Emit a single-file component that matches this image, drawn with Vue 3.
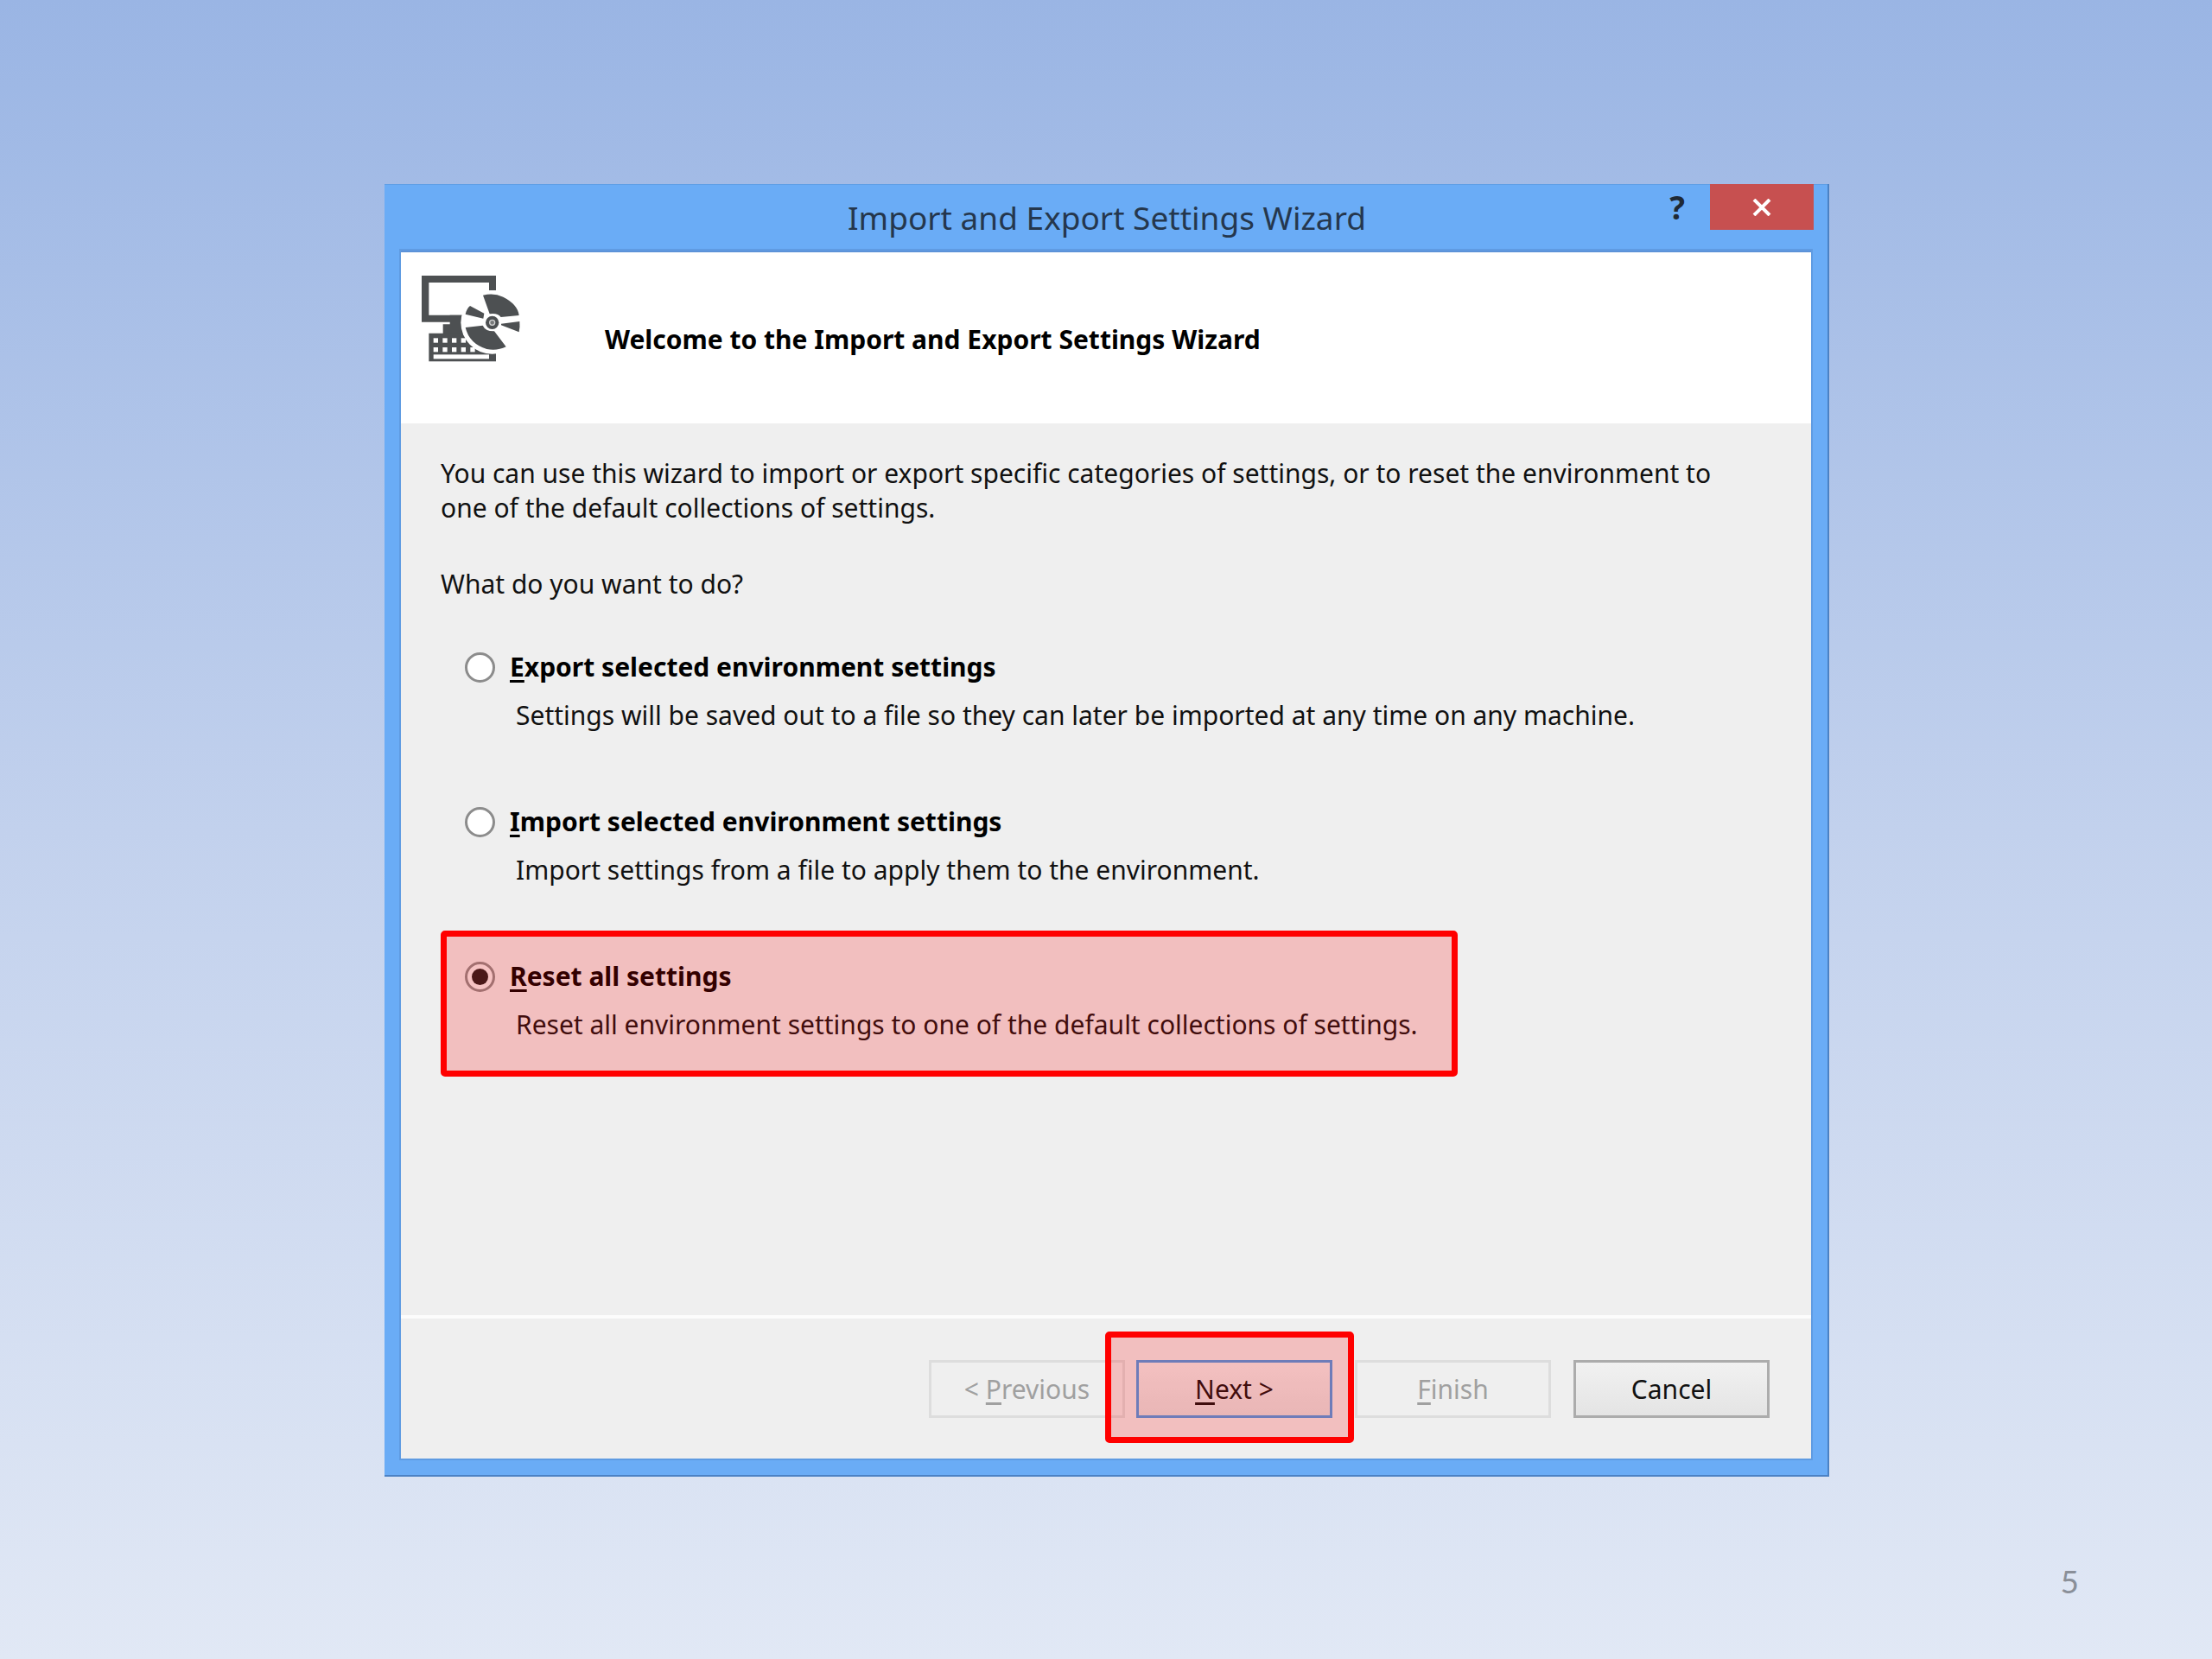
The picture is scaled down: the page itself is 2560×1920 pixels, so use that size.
<script setup>
import { ref } from 'vue'

const selected = ref('reset')

const options = [
  {
    id: 'export',
    key: 'E',
    rest: 'xport selected environment settings',
    text: 'Settings will be saved out to a file so they can later be imported at any time on any machine.'
  },
  {
    id: 'import',
    key: 'I',
    rest: 'mport selected environment settings',
    text: 'Import settings from a file to apply them to the environment.'
  },
  {
    id: 'reset',
    key: 'R',
    rest: 'eset all settings',
    text: 'Reset all environment settings to one of the default collections of settings.',
    marked: true
  }
]

const topKeys = [41, 73, 105, 137]
const bottomKeys = [41, 73, 105, 137, 169]
</script>

<template>
  <div class="slide">
    <main class="dialog" role="dialog" aria-labelledby="dialog-title">
      <header class="titlebar">
        <h1 id="dialog-title" class="title">Import and Export Settings Wizard</h1>
        <div class="controls">
          <button type="button" class="help" aria-label="Help">?</button>
          <button type="button" class="close" aria-label="Close">
            <svg viewBox="0 0 22 20" width="22" height="20" aria-hidden="true">
              <path d="M2 1L20 19M20 1L2 19" stroke="#fff" stroke-width="4" fill="none" />
            </svg>
          </button>
        </div>
      </header>

      <div class="client">
        <section class="banner">
          <svg class="logo" viewBox="0 0 342 300" aria-hidden="true">
            <g fill="#4d5052">
              <path fill-rule="evenodd" d="M0 0H258V161H0ZM25 24V137H234V24Z" />
              <path d="M98 137H200V205H74V169H98Z" />
              <path d="M25 200H258V298H25Z" />
            </g>
            <g fill="#fff">
              <rect v-for="x in topKeys" :key="'t' + x" :x="x" y="217" width="16" height="16" />
              <rect v-for="x in bottomKeys" :key="'b' + x" :x="x" y="249" width="16" height="16" />
              <rect x="41" y="274" width="193" height="15" />
              <path d="M225 51H270V100H225Z" />
              <circle cx="245" cy="163" r="109" />
            </g>
            <g fill="#4d5052">
              <path d="M213 68Q250 58 283 74Q334 100 338 138L275 144Q264 129 236 133Z" />
              <path d="M152 180L212 173Q222 194 252 193L293 247Q262 262 226 255Q165 236 152 180Z" />
              <path d="M168 105L217 131L214 149L152 134Q156 115 168 105Z" />
              <path d="M276 167L340 159Q342 178 338 196L276 172Z" />
              <circle cx="245" cy="163" r="23" />
            </g>
            <circle cx="245" cy="163" r="9" fill="#77797a" stroke="#d0d1d1" stroke-width="4" />
          </svg>
          <h2 class="welcome">Welcome to the Import and Export Settings Wizard</h2>
        </section>

        <section class="content">
          <p class="intro">
            You can use this wizard to import or export specific categories of settings, or to reset the environment to
            one of the default collections of settings.
          </p>
          <p id="question" class="question">What do you want to do?</p>

          <div class="options" role="radiogroup" aria-labelledby="question">
            <div v-for="o in options" :key="o.id" class="option">
              <div class="choice">
                <input :id="o.id" v-model="selected" class="radio" type="radio" name="action" :value="o.id" />
                <label :for="o.id" class="label"><u>{{ o.key }}</u>{{ o.rest }}</label>
              </div>
              <p class="hint">{{ o.text }}</p>
              <span v-if="o.marked" class="marker"></span>
            </div>
          </div>
        </section>

        <footer class="actions">
          <div class="pair">
            <button type="button" class="btn" disabled>&lt; <u>P</u>revious</button>
            <div class="next">
              <button type="button" class="btn primary"><u>N</u>ext &gt;</button>
              <span class="marker around"></span>
            </div>
          </div>
          <button type="button" class="btn" disabled><u>F</u>inish</button>
          <button type="button" class="btn">Cancel</button>
        </footer>
      </div>
    </main>
    <p class="page-number">5</p>
  </div>
</template>

<style>
body {
  margin: 0;
}
</style>

<style scoped>
.slide {
  box-sizing: border-box;
  min-height: 100vh;
  padding: 213px 40px 64px 42px;
  background: linear-gradient(#9ab5e4, #c2d1ed 50%, #e1e8f5);
  font-family: "Noto Sans", "Open Sans", sans-serif;
  font-size: 30px;
  line-height: 40px;
  color: #111;
}

h1,
h2,
p {
  margin: 0;
}

button {
  padding: 0;
  border: 0;
  font: inherit;
  color: inherit;
}

u {
  text-decoration-thickness: 3px;
  text-underline-offset: 4px;
  text-decoration-skip-ink: none;
}

.dialog {
  box-sizing: border-box;
  max-width: 1672px;
  margin: 0 auto;
  padding-bottom: 21px;
  background: #6aacf6;
  box-shadow: inset -2px -2px #4c82c4, inset 0 1px #5f9fe6;
}

.titlebar {
  display: grid;
  grid-template-columns: 1fr auto 1fr;
  align-items: center;
  min-height: 77px;
  padding: 0 18px;
}

.title {
  grid-column: 2;
  font-size: 37px;
  font-weight: 400;
  line-height: 48px;
  color: #25374d;
}

.controls {
  display: flex;
  align-self: start;
  justify-content: flex-end;
}

.help {
  width: 76px;
  height: 53px;
  background: transparent;
  font-size: 37px;
  font-weight: 700;
  color: #1f2a36;
}

.close {
  display: flex;
  align-items: center;
  justify-content: center;
  width: 120px;
  height: 53px;
  background: #c75050;
}

.client {
  margin: 0 21px 0 19px;
  background: #efefef;
  box-shadow: 0 0 0 2px #5f9be2;
  border-top: 2px solid #5c92d8;
}

.banner {
  display: flex;
  align-items: center;
  gap: 98px;
  min-height: 198px;
  padding: 4px 24px 0;
  box-sizing: border-box;
  background: #fff;
}

.logo {
  align-self: flex-start;
  width: 114px;
  height: 100px;
  margin-top: 23px;
}

.welcome {
  font-size: 30px;
  font-weight: 700;
  color: #000;
}

.content {
  padding: 38px 46px 276px;
}

.intro {
  max-width: 1480px;
}

.question {
  margin-top: 48px;
}

.options {
  display: flex;
  flex-direction: column;
  align-items: flex-start;
  gap: 10px;
  margin-top: 23px;
}

.option {
  position: relative;
  padding: 33px 46px 40px 28px;
}

.choice {
  display: flex;
  align-items: center;
  gap: 17px;
}

.radio {
  display: grid;
  place-content: center;
  box-sizing: border-box;
  width: 35px;
  height: 35px;
  margin: 0;
  border: 3px solid #8c8c8c;
  border-radius: 50%;
  background: #fff;
  appearance: none;
}

.radio:checked {
  background: #f4f4f4;
}

.radio:checked::before {
  width: 19px;
  height: 19px;
  border-radius: 50%;
  background: #1e1e1e;
  content: "";
}

.label {
  font-weight: 700;
  color: #000;
}

.hint {
  margin: 16px 0 0 59px;
}

.marker {
  position: absolute;
  inset: 0;
  border: 7px solid #f00;
  border-radius: 5px;
  background: rgba(255, 0, 0, 0.2);
  background-clip: padding-box;
  pointer-events: none;
}

.marker.around {
  inset: -33px -25px -29px -36px;
}

.actions {
  display: flex;
  justify-content: flex-end;
  gap: 26px;
  padding: 48px 48px 47px;
  border-top: 4px solid #fcfcfc;
}

.pair {
  display: flex;
  gap: 13px;
}

.next {
  position: relative;
}

.btn {
  box-sizing: border-box;
  width: 227px;
  height: 67px;
  border: 3px solid #acacac;
  background: linear-gradient(#f1f1f1, #e4e4e4);
  color: #111;
}

.btn:disabled {
  border-color: #dddddd;
  background: #efefef;
  color: #a0a0a0;
}

.btn.primary {
  border-color: #4a9be8;
}

.page-number {
  margin: 97px 114px 0;
  font-family: Lato, sans-serif;
  font-size: 37px;
  line-height: 48px;
  text-align: right;
  color: #8a8f98;
}
</style>
